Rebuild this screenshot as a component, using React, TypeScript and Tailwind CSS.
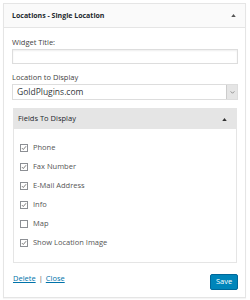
import React from "react";

const Check = ({ checked }: { checked: boolean }) => (
  <span className="w-[8px] h-[8px] border border-[#8c8f94] bg-white flex items-center justify-center shrink-0">
    {checked && (
      <svg width="8" height="8" viewBox="0 0 8 8">
        <path d="M1.2 4.1 L3.1 6 L6.8 1.6" fill="none" stroke="#555" strokeWidth="1" />
      </svg>
    )}
  </span>
);

const fields: [string, boolean][] = [
  ["Phone", true],
  ["Fax Number", true],
  ["E-Mail Address", true],
  ["Info", true],
  ["Map", false],
  ["Show Location Image", true],
];

export default function App() {
  return (
    <div className="w-[250px] h-[300px] bg-white pt-[3px] pl-[3px]" style={{ fontFamily: '"Open Sans", sans-serif' }}>
      <div className="w-[243px] h-[295px] border border-[#e5e5e5] shadow-[0_1px_1px_rgba(0,0,0,0.04)] flex flex-col">
        <div className="h-[24px] shrink-0 bg-[#fafafa] border-b border-[#e5e5e5] flex items-center justify-between pl-[8px] pr-[9px]">
          <span className="text-[7px] font-bold text-[#23282d] leading-none">Locations - Single Location</span>
          <svg width="5" height="3" viewBox="0 0 6 4"><path d="M0 4 L3 0 L6 4 Z" fill="#555" /></svg>
        </div>
        <div className="px-[8px] flex flex-col">
          <div className="mt-[10px] h-[10px] flex items-center text-[7.5px] text-[#444] leading-none">Widget Title:</div>
          <div className="mt-[1px] h-[15px] w-[226px] border border-[#ddd] shadow-[inset_0_1px_2px_rgba(0,0,0,0.07)] bg-white" />
          <div className="mt-[9px] h-[10px] flex items-center text-[7.5px] text-[#444] leading-none">Location to Display</div>
          <div className="mt-[1px] h-[16px] w-[226px] border border-[#ddd] bg-white flex items-center">
            <span className="flex-1 pl-[4px] text-[8.5px] text-[#32373c] leading-none">GoldPlugins.com</span>
            <span className="w-[11px] h-[14px] bg-[#e5e5e5] border-l border-[#ccc] flex items-center justify-center">
              <svg width="5" height="3" viewBox="0 0 6 4"><path d="M0.5 0.5 L3 3 L5.5 0.5" fill="none" stroke="#777" strokeWidth="1" /></svg>
            </span>
          </div>
          <div className="mt-[8px] ml-[1px] w-[224px] h-[155px] border border-[#e5e5e5] flex flex-col">
            <div className="h-[20px] shrink-0 bg-[#e5e5e5] flex items-center justify-between pl-[4px] pr-[9px]">
              <span className="text-[7.5px] text-[#23282d] leading-none">Fields To Display</span>
              <svg width="5" height="3" viewBox="0 0 6 4"><path d="M0 4 L3 0 L6 4 Z" fill="#333" /></svg>
            </div>
            <div className="pl-[6px] pt-[13px] flex flex-col gap-[7px]">
              {fields.map(([label, c]) => (
                <div key={label} className="flex items-center gap-[5px] h-[12px]">
                  <Check checked={c} />
                  <span className="text-[7.5px] text-[#555] leading-none">{label}</span>
                </div>
              ))}
            </div>
          </div>
          <div className="mt-[11px] flex items-start justify-between">
            <div className="h-[10px] text-[7.5px] leading-none pl-[1px] flex items-center gap-[3px]">
              <a className="text-[#0073aa] underline">Delete</a>
              <span className="text-[#555]">|</span>
              <a className="text-[#0073aa] underline">Close</a>
            </div>
            <button className="w-[28px] h-[16px] bg-[#0085ba] border border-[#006799] rounded-[2px] text-white text-[7.5px] leading-none mr-[-1px]">Save</button>
          </div>
        </div>
      </div>
    </div>
  );
}
